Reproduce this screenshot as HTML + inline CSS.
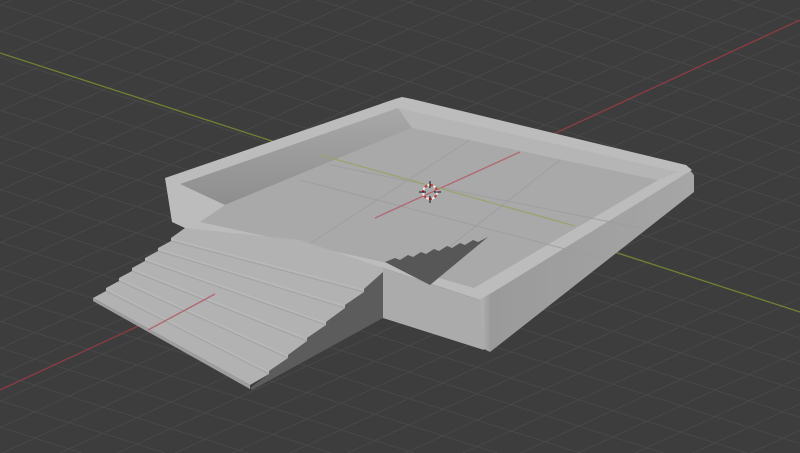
<!DOCTYPE html>
<html><head><meta charset="utf-8"><style>html,body{margin:0;padding:0;background:#3d3d3d;overflow:hidden}svg{display:block}</style></head>
<body>
<svg width="800" height="453" viewBox="0 0 800 453" xmlns="http://www.w3.org/2000/svg">
<defs>
<pattern id="g" width="40" height="40" patternUnits="userSpaceOnUse" patternTransform="matrix(0.85,0.27,0.85,-0.39,0,5)">
<rect width="40" height="40" fill="#3d3d3d"/>
<path d="M0 0H40M0 0V40" stroke="#4b4b4b" stroke-width="2.2" fill="none"/>
</pattern>
<linearGradient id="lw" x1="0" y1="0" x2="0" y2="1">
<stop offset="0" stop-color="#a8a8a8"/><stop offset="1" stop-color="#8e8e8e"/></linearGradient>
<linearGradient id="rs" x1="0" y1="0" x2="1" y2="0">
<stop offset="0" stop-color="#b4b4b4"/><stop offset="0.05" stop-color="#9a9a9a"/><stop offset="1" stop-color="#a6a6a6"/></linearGradient>
</defs>
<rect width="800" height="453" fill="url(#g)"/>
<line x1="0" y1="390" x2="800" y2="20" stroke="#8c3c44" stroke-width="1.3"/>
<line x1="0" y1="53" x2="800" y2="312" stroke="#6f8233" stroke-width="1.3"/>

<!-- right side face -->
<polygon points="480,300 688,168 694,175 694,192 490,352 482,348" fill="url(#rs)"/>
<!-- front face -->
<polygon points="383,268 480,300 484,350 383,318" fill="#ababab"/>
<!-- rim top -->
<polygon points="165,178 395,99 402,97 412,99 686,165 692,170 480,300 383,268 185,228 172,222" fill="#bcbcbc"/>
<!-- back-left inner wall -->
<polygon points="180,184 398,108 412,128 225,205" fill="url(#lw)"/>
<!-- back-right inner wall -->
<polygon points="398,108 678,172 658,180 412,128" fill="#b5b5b5"/>
<!-- floor -->
<polygon points="225,205 412,128 658,180 474,288 383,262 200,222" fill="#a9a9a9"/>
<g stroke="#9c9c9c" stroke-width="1" opacity="0.8">
<line x1="300" y1="180" x2="600" y2="258"/><line x1="330" y1="165" x2="640" y2="228"/>
<line x1="470" y1="140" x2="300" y2="250"/><line x1="560" y1="160" x2="420" y2="270"/>
</g>
<line x1="375" y1="218" x2="520" y2="152" stroke="#b06a72" stroke-width="1.3"/>
<line x1="320" y1="155" x2="575" y2="226" stroke="#98a470" stroke-width="1.3"/>
<!-- notch -->
<polygon points="385,262 395,258 400,260 408,255 413,257 421,252 426,254 434,249 439,251 447,246 452,248 460,243 465,245 473,240 478,242 488,237 430,285" fill="#575757"/>

<!-- stairs dark side -->
<polygon points="250,388 269,374 269,371 288,358 288,355 307,341 307,338 326,325 326,322 345,308 345,305 364,292 364,289 383,270 383,318 252,390" fill="#5c5c5c"/>
<!-- stairs top -->
<polygon points="93,298 106,291 106,288 119,281 119,278 132,271 132,268 145,261 145,258 158,251 158,248 171,241 171,238 185,228 300,240 383,268 383,272 364,289 364,292 345,305 345,308 326,322 326,325 307,338 307,341 288,355 288,358 269,371 269,374 250,385" fill="#b2b2b2"/>
<polygon points="93,298 250,385 250,389 93,301" fill="#9e9e9e"/>
<g stroke="#bababa" stroke-width="1.2">
<line x1="106" y1="289" x2="269" y2="372"/><line x1="119" y1="279" x2="288" y2="356"/>
<line x1="132" y1="269" x2="307" y2="339"/><line x1="145" y1="259" x2="326" y2="323"/>
<line x1="158" y1="249" x2="345" y2="306"/><line x1="171" y1="239" x2="364" y2="290"/>
</g>
<g stroke="#a4a4a4" stroke-width="1">
<line x1="106" y1="291" x2="269" y2="374"/><line x1="119" y1="281" x2="288" y2="358"/>
<line x1="132" y1="271" x2="307" y2="341"/><line x1="145" y1="261" x2="326" y2="325"/>
<line x1="158" y1="251" x2="345" y2="308"/><line x1="171" y1="241" x2="364" y2="292"/>
</g>
<line x1="148" y1="330" x2="215" y2="294" stroke="#b06a72" stroke-width="1.3"/>

<!-- 3D cursor -->
<g transform="translate(430,192)">
<circle r="7" fill="none" stroke="#e8e8e8" stroke-width="2" stroke-dasharray="3 3"/>
<circle r="7" fill="none" stroke="#c04040" stroke-width="2" stroke-dasharray="3 3" stroke-dashoffset="3"/>
<path d="M-11 0H-4M4 0H11M0 -11V-4M0 4V11" stroke="#111" stroke-width="1"/>
</g>
</svg>
</body></html>
